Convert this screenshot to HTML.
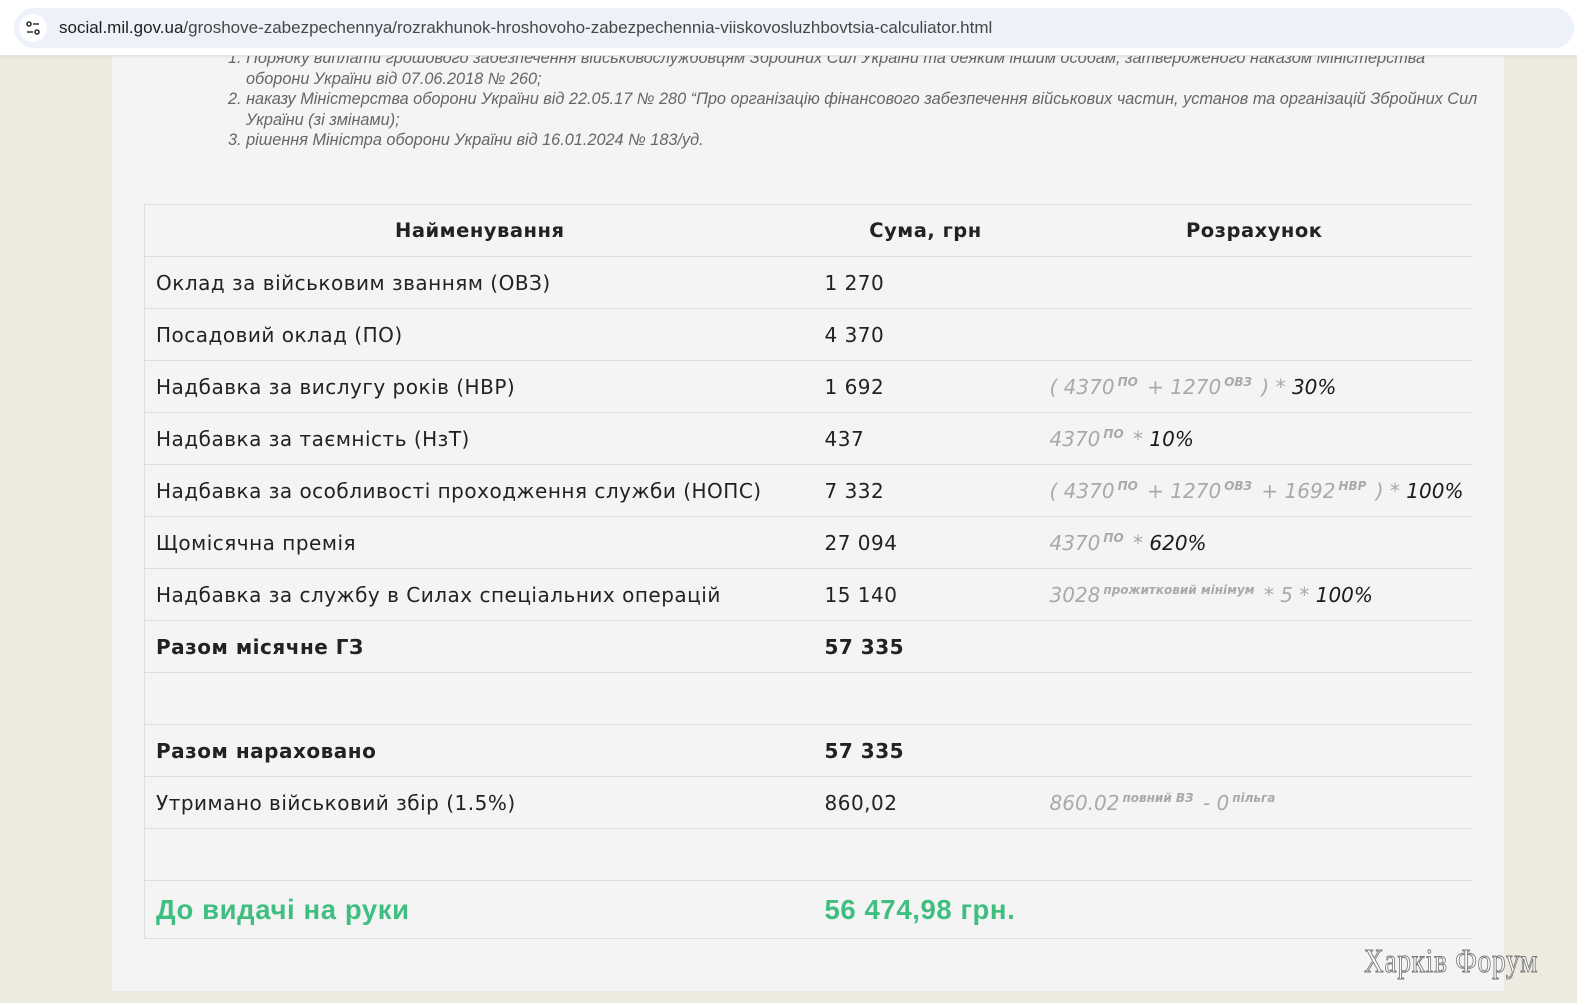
<!DOCTYPE html>
<html><head><meta charset="utf-8"><style>
*{margin:0;padding:0;box-sizing:border-box}
html,body{width:1577px;height:1003px;overflow:hidden;background:#edebe0;font-family:"Liberation Sans",sans-serif}
.bar{position:absolute;left:0;top:0;width:1577px;height:56px;background:#fff;border-bottom:1px solid #e2e2e2;box-shadow:0 1px 3px rgba(0,0,0,.08);z-index:5}
.pill{position:absolute;left:14px;top:8px;width:1560px;height:40px;border-radius:20px;background:#edf1f9}
.ic{position:absolute;left:5px;top:6px;width:28px;height:28px;border-radius:14px;background:#fff}
.url{position:absolute;left:59px;top:18px;font-size:17px;line-height:20px;color:#1f1f1f;white-space:nowrap}
.url span{color:#474747}
.panel{position:absolute;left:112px;top:0;width:1392px;height:991px;background:#f4f4f4}
.notes{position:absolute;left:228px;top:48px;font-style:italic;font-size:16.3px;color:#666;line-height:20.5px}
.notes div{padding-left:18px;text-indent:-18px}
table{position:absolute;left:144px;top:204px;width:1328px;border-collapse:collapse;font-family:"DejaVu Sans",sans-serif;font-size:20px;color:#222;letter-spacing:.5px}
td,th{height:52px;border-top:1px solid #dedede;border-bottom:1px solid #dedede;padding:0 0 0 11px;text-align:left;vertical-align:middle;font-weight:normal}
tr>*:first-child{border-left:1px solid #dedede}
th{font-weight:bold;text-align:center;padding:0;font-size:19.5px}
td:nth-child(2){padding-left:10px}
td:nth-child(3){padding-left:13px}
b{font-weight:bold}
.c{font-style:italic;color:#a9a9a9;letter-spacing:0;font-size:20px}
.c sup{font-size:12px;font-weight:bold;vertical-align:8px;margin-left:3px;margin-right:3px}
.c i{color:#1a1a1a}
.g td{height:58px;color:#3fbf7f;font-weight:bold;font-size:27.5px;letter-spacing:.6px;font-family:"Liberation Sans",sans-serif}
.wm{position:absolute;left:1364px;top:943px;white-space:nowrap;font-family:"Liberation Serif",serif;font-size:34px;color:#fff;-webkit-text-stroke:1px #777;transform:scaleX(.8);transform-origin:left;letter-spacing:1px}
</style></head><body>
<div class="panel"></div>
<div class="notes">
<div>1. Порядку виплати грошового забезпечення військовослужбовцям Збройних Сил України та деяким іншим особам, затвердженого наказом Міністерства<br>оборони України від 07.06.2018 № 260;</div>
<div>2. наказу Міністерства оборони України від 22.05.17 № 280 “Про організацію фінансового забезпечення військових частин, установ та організацій Збройних Сил<br>України (зі змінами);</div>
<div>3. рішення Міністра оборони України від 16.01.2024 № 183/уд.</div>
</div>
<table>
<colgroup><col style="width:670px"><col style="width:222px"><col></colgroup>
<tr><th>Найменування</th><th>Сума, грн</th><th>Розрахунок</th></tr>
<tr><td>Оклад за військовим званням (ОВЗ)</td><td>1 270</td><td></td></tr>
<tr><td>Посадовий оклад (ПО)</td><td>4 370</td><td></td></tr>
<tr><td>Надбавка за вислугу років (НВР)</td><td>1 692</td><td class="c">( 4370<sup>ПО</sup> + 1270<sup>ОВЗ</sup> ) * <i>30%</i></td></tr>
<tr><td>Надбавка за таємність (НзТ)</td><td>437</td><td class="c">4370<sup>ПО</sup> * <i>10%</i></td></tr>
<tr><td>Надбавка за особливості проходження служби (НОПС)</td><td>7 332</td><td class="c">( 4370<sup>ПО</sup> + 1270<sup>ОВЗ</sup> + 1692<sup>НВР</sup> ) * <i>100%</i></td></tr>
<tr><td>Щомісячна премія</td><td>27 094</td><td class="c">4370<sup>ПО</sup> * <i>620%</i></td></tr>
<tr><td>Надбавка за службу в Силах спеціальних операцій</td><td>15 140</td><td class="c">3028<sup>прожитковий мінімум</sup> * 5 * <i>100%</i></td></tr>
<tr><td><b>Разом місячне ГЗ</b></td><td><b>57 335</b></td><td></td></tr>
<tr><td></td><td></td><td></td></tr>
<tr><td><b>Разом нараховано</b></td><td><b>57 335</b></td><td></td></tr>
<tr><td>Утримано військовий збір (1.5%)</td><td>860,02</td><td class="c">860.02<sup>повний ВЗ</sup> - 0<sup>пільга</sup></td></tr>
<tr><td></td><td></td><td></td></tr>
<tr class="g"><td>До видачі на руки</td><td>56 474,98 грн.</td><td></td></tr>
</table>
<div class="wm">Харків Форум</div>
<div class="bar"><div class="pill"><div class="ic"><svg width="28" height="28" viewBox="0 0 28 28" fill="none" stroke="#333" stroke-width="1.6"><circle cx="10" cy="10" r="2"/><path d="M14 10h6M8 18h6"/><circle cx="18" cy="18" r="2"/></svg></div></div>
<div class="url">social.mil.gov.ua<span>/groshove-zabezpechennya/rozrakhunok-hroshovoho-zabezpechennia-viiskovosluzhbovtsia-calculiator.html</span></div></div>
</body></html>
